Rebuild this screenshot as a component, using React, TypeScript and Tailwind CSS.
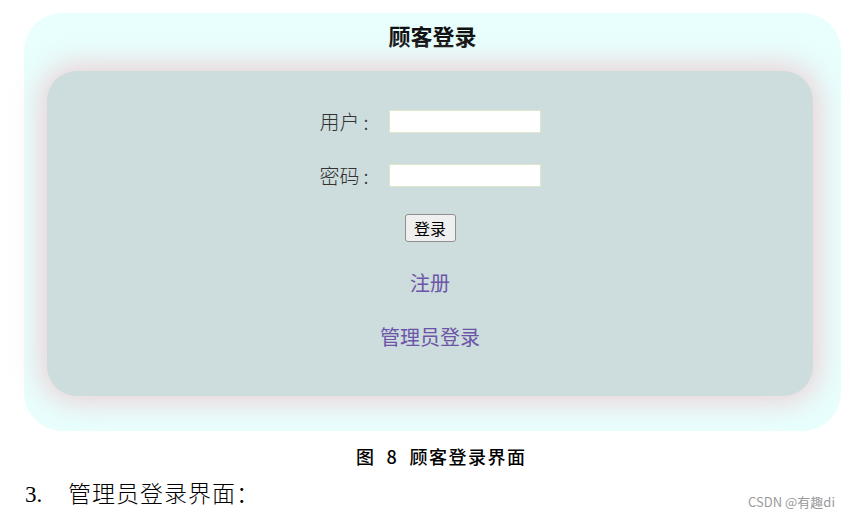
import React from 'react';

const cjkSans = "font-['Microsoft_YaHei','Noto_Sans_CJK_SC',sans-serif]";

const Field: React.FC<{ label: string; type?: string; className?: string }> = ({ label, type = 'text', className = '' }) => (
  <div className={`flex items-center h-[23px] ${className}`}>
    <span className="text-[20px] leading-[30px] text-[#333] font-light w-[69px]">
      {label}
      <span className="ml-[4px]">:</span>
    </span>
    <input
      type={type}
      className="w-[152px] h-[23px] bg-white border border-[#dde6c8] outline-none"
    />
  </div>
);

const App: React.FC = () => {
  return (
    <div className={`relative w-[850px] h-[519px] bg-white overflow-hidden ${cjkSans}`}>
      {/* outer card */}
      <div className="ml-[24px] pt-[13px]">
        <div className="w-[817px] h-[418px] rounded-[38px] bg-[#e8fffe] pt-[7px] flex flex-col">
          <h2 className="text-center text-[22px] leading-[30px] font-bold text-[#111]">顾客登录</h2>

          {/* inner card */}
          <div className="ml-[23px] mt-[21px] w-[766px] h-[325px] rounded-[30px] bg-[#cddcdc] shadow-[0_0_28px_8px_rgba(236,198,204,0.75)] flex flex-col items-center pt-[39px]">
            <Field label="用户" />
            <Field label="密码" type="password" className="mt-[31px]" />
            <button className="mt-[27px] w-[51px] h-[28px] text-[16px] leading-none text-black bg-[#efefef] border border-[#8f8f8f] rounded-[3px]">
              登录
            </button>
            <a className="mt-[26px] text-[20px] leading-[30px] text-[#6c55a8] cursor-pointer">注册</a>
            <a className="mt-[24px] text-[20px] leading-[30px] text-[#6c55a8] cursor-pointer">管理员登录</a>
          </div>
        </div>
      </div>

      {/* caption */}
      <p className="mt-[13px] pl-[356px] text-[18px] leading-[24px] font-medium tracking-[1.5px] text-black">
        图&nbsp;&nbsp;8&nbsp;&nbsp;顾客登录界面
      </p>

      <p className="mt-[12px] pl-[25px] text-[23px] leading-[30px] text-black font-['Liberation_Serif','Noto_Sans_CJK_SC',serif]">
        <span className="inline-block w-[43px]">3.</span>
        <span className="font-light tracking-[1px]">管理员登录界面：</span>
      </p>

      <span className="absolute right-[15px] bottom-[8px] text-[13px] text-[#9a9a9a]">CSDN @有趣di</span>
    </div>
  );
};

export default App;
